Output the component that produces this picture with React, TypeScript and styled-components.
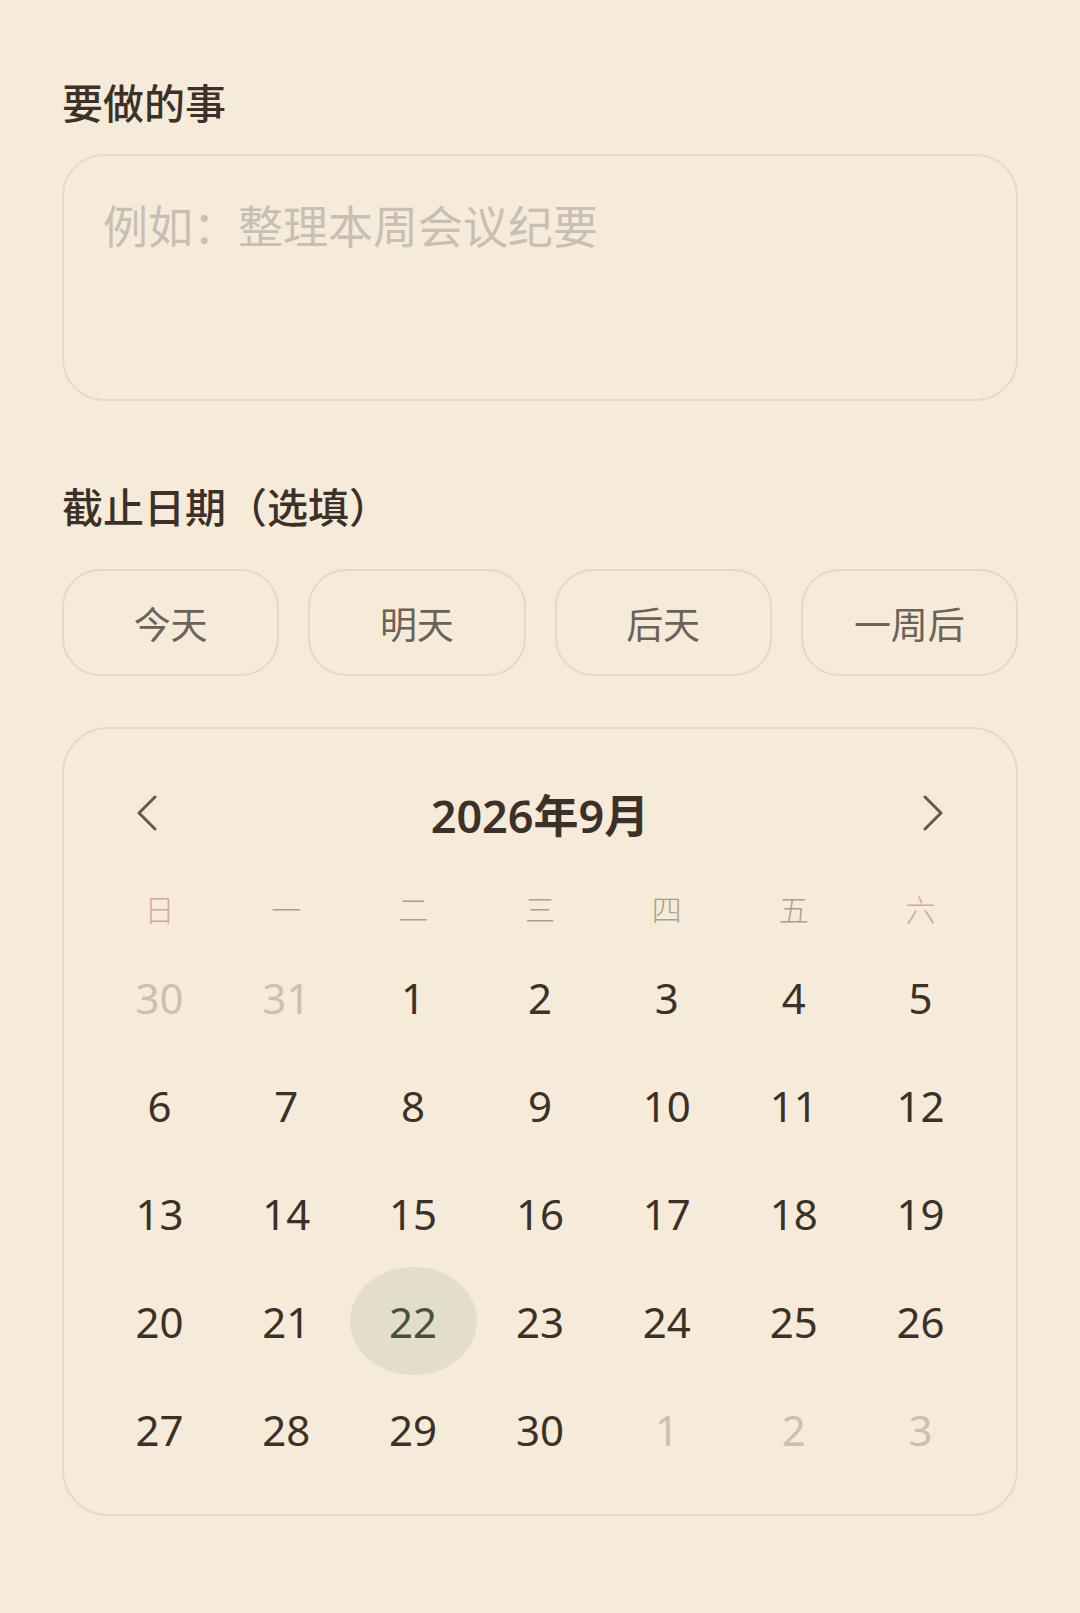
import React, { useState } from "react";
import styled, { createGlobalStyle } from "styled-components";

const GlobalStyle = createGlobalStyle`
  html, body {
    margin: 0;
    padding: 0;
    background: #f6ebd9;
  }
  body {
    min-height: 100vh;
    font-family: "Noto Sans", "Noto Sans CJK SC", sans-serif;
    -webkit-font-smoothing: antialiased;
  }
  * { box-sizing: border-box; }
`;

const Page = styled.main`
  display: flex;
  flex-direction: column;
  padding: 73px 62px 60px;
  min-height: 1613px;
  background: #f6ebd9;
`;

const Label = styled.h2<{ $gap: number }>`
  margin: 0 0 ${(p) => p.$gap}px;
  font-family: "Noto Sans CJK SC", sans-serif;
  font-size: 41px;
  line-height: 56px;
  font-weight: 500;
  color: #3b3128;
`;

const TaskInput = styled.textarea`
  display: block;
  width: 100%;
  height: 247px;
  margin: 0 0 76px;
  padding: 37px 39px;
  border: 2px solid #e5dbc9;
  border-radius: 42px;
  background: transparent;
  resize: none;
  outline: none;
  font-family: "Noto Sans CJK SC", sans-serif;
  font-size: 45px;
  line-height: 1.4;
  color: #3b3128;
  &::placeholder {
    color: #c7bfb3;
  }
`;

const QuickRow = styled.div`
  display: grid;
  grid-template-columns: repeat(4, 1fr);
  gap: 29px;
  margin-bottom: 51px;
`;

const QuickButton = styled.button`
  height: 107px;
  border: 2px solid #e3d9c7;
  border-radius: 38px;
  background: transparent;
  font-family: "Noto Sans CJK SC", sans-serif;
  font-size: 37px;
  font-weight: 400;
  color: #6b6258;
  cursor: pointer;
  padding: 0;
`;

const Card = styled.section`
  border: 2px solid #e5dbc9;
  border-radius: 46px;
  padding: 54px 32px 31px;
`;

const Header = styled.div`
  display: flex;
  align-items: center;
  justify-content: space-between;
  height: 60px;
  padding: 0 41px;
  margin-bottom: 34px;
`;

const NavButton = styled.button`
  display: flex;
  align-items: center;
  justify-content: center;
  width: 20px;
  height: 36px;
  padding: 0;
  border: none;
  background: transparent;
  cursor: pointer;
`;

const MonthTitle = styled.div`
  font-family: "Noto Sans", "Noto Sans CJK SC", sans-serif;
  font-size: 45px;
  font-weight: 600;
  color: #3b3128;
`;

const WeekRow = styled.div`
  display: grid;
  grid-template-columns: repeat(7, 1fr);
  height: 66px;
  align-items: center;
`;

const WeekDay = styled.div<{ $weekend: boolean }>`
  text-align: center;
  font-family: "Noto Sans CJK SC", sans-serif;
  font-size: 30px;
  font-weight: 300;
  line-height: 1;
  padding-bottom: 4px;
  color: ${(p) => (p.$weekend ? "#d3a89f" : "#a99f92")};
`;

const DaysGrid = styled.div`
  display: grid;
  grid-template-columns: repeat(7, 1fr);
  grid-auto-rows: 108px;
`;

const DayCell = styled.button<{ $muted: boolean; $selected: boolean }>`
  display: flex;
  align-items: center;
  justify-content: center;
  margin: 0;
  padding: 0;
  border: none;
  border-radius: 50%;
  background: ${(p) => (p.$selected ? "#e2dec9" : "transparent")};
  font-family: "Noto Sans", sans-serif;
  font-size: 42px;
  font-weight: 400;
  color: ${(p) => (p.$muted ? "#c9c0b4" : p.$selected ? "#47523f" : "#3b3128")};
  cursor: pointer;
`;

const Chevron = ({ dir }: { dir: "left" | "right" }) => (
  <svg width="20" height="36" viewBox="0 0 20 36" fill="none">
    <polyline
      points={dir === "left" ? "18,2 2,18 18,34" : "2,2 18,18 2,34"}
      stroke="#65584a"
      strokeWidth="3"
      strokeLinecap="round"
      strokeLinejoin="round"
    />
  </svg>
);

type Day = { n: number; muted: boolean; key: string };

const buildDays = (): Day[] => {
  const days: Day[] = [];
  [30, 31].forEach((n) => days.push({ n, muted: true, key: `p${n}` }));
  for (let i = 1; i <= 30; i++) days.push({ n: i, muted: false, key: `c${i}` });
  [1, 2, 3].forEach((n) => days.push({ n, muted: true, key: `n${n}` }));
  return days;
};

const weekDays = ["日", "一", "二", "三", "四", "五", "六"];
const quick = ["今天", "明天", "后天", "一周后"];

export default function App() {
  const [selected, setSelected] = useState("c22");
  const days = buildDays();

  return (
    <>
      <GlobalStyle />
      <Page>
        <Label $gap={25}>要做的事</Label>
        <TaskInput placeholder="例如：整理本周会议纪要" />

        <Label $gap={36}>截止日期（选填）</Label>
        <QuickRow>
          {quick.map((q) => (
            <QuickButton key={q}>{q}</QuickButton>
          ))}
        </QuickRow>

        <Card>
          <Header>
            <NavButton aria-label="上个月">
              <Chevron dir="left" />
            </NavButton>
            <MonthTitle>2026年9月</MonthTitle>
            <NavButton aria-label="下个月">
              <Chevron dir="right" />
            </NavButton>
          </Header>
          <WeekRow>
            {weekDays.map((w, i) => (
              <WeekDay key={w} $weekend={i === 0 || i === 6}>
                {w}
              </WeekDay>
            ))}
          </WeekRow>
          <DaysGrid>
            {days.map((d) => (
              <DayCell
                key={d.key}
                $muted={d.muted}
                $selected={selected === d.key}
                onClick={() => !d.muted && setSelected(d.key)}
              >
                {d.n}
              </DayCell>
            ))}
          </DaysGrid>
        </Card>
      </Page>
    </>
  );
}
